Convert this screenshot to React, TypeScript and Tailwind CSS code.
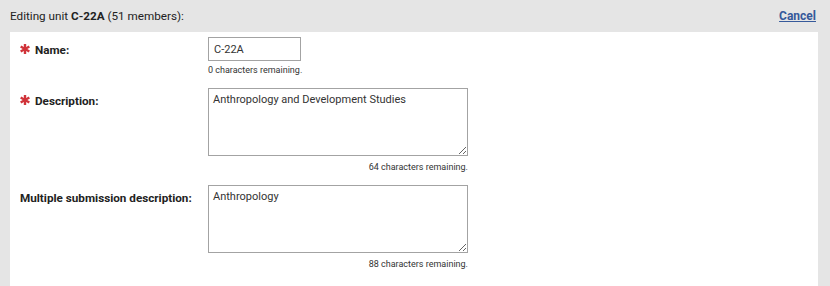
import React from "react";

function Star() {
  return (
    <svg width="10" height="10" viewBox="0 0 10 10" className="shrink-0 mt-[-3px]" aria-hidden>
      <g stroke="#d0343a" strokeWidth="2.4" strokeLinecap="butt">
        <line x1="5" y1="0" x2="5" y2="10" />
        <line x1="0.67" y1="2.5" x2="9.33" y2="7.5" />
        <line x1="0.67" y1="7.5" x2="9.33" y2="2.5" />
      </g>
    </svg>
  );
}

function Label({ text, required }: { text: string; required?: boolean }) {
  return (
    <div className="self-start flex items-center gap-[5px] pt-[5px] text-[11.7px] leading-[16px] font-bold text-[#222]">
      {required && <Star />}
      <span>{text}</span>
    </div>
  );
}

export default function App() {
  return (
    <div
      className="w-[830px] h-[286px] overflow-hidden bg-[#e5e5e5] flex flex-col"
      style={{ fontFamily: "Roboto, 'Liberation Sans', Arial, sans-serif" }}
    >
      <div className="h-[32px] shrink-0 flex items-center justify-between pl-[10px] pr-[14px] text-[11.7px] leading-[16px] text-[#222]">
        <div>
          Editing unit <span className="font-bold">C-22A</span> (51 members):
        </div>
        <a href="#" className="font-bold underline text-[#36599a] text-[12px]">
          Cancel
        </a>
      </div>
      <div className="ml-[10px] mr-[12px] flex-1 bg-white pt-[5px] pl-[10px]">
        <div className="grid grid-cols-[188px_1fr] gap-y-[12px]">
          <Label text="Name:" required />
          <div className="flex flex-col">
            <input
              defaultValue="C-22A"
              className="block w-[93px] h-[24px] border border-[#a3a3a3] pl-[5px] text-[11px] leading-[14px] text-[#333] outline-none"
            />
            <div className="mt-[3px] text-[9px] leading-[12px] text-[#333]">0 characters remaining.</div>
          </div>

          <Label text="Description:" required />
          <div className="flex flex-col w-[260px]">
            <textarea
              defaultValue="Anthropology and Development Studies"
              className="block w-[260px] h-[68px] border border-[#a3a3a3] pl-[4px] pt-[4px] text-[11px] leading-[14px] text-[#333] outline-none"
            />
            <div className="mt-[5px] text-right text-[9px] leading-[12px] text-[#333]">64 characters remaining.</div>
          </div>

          <Label text="Multiple submission description:" />
          <div className="flex flex-col w-[260px]">
            <textarea
              defaultValue="Anthropology"
              className="block w-[260px] h-[68px] border border-[#a3a3a3] pl-[4px] pt-[4px] text-[11px] leading-[14px] text-[#333] outline-none"
            />
            <div className="mt-[5px] text-right text-[9px] leading-[12px] text-[#333]">88 characters remaining.</div>
          </div>
        </div>
      </div>
    </div>
  );
}
